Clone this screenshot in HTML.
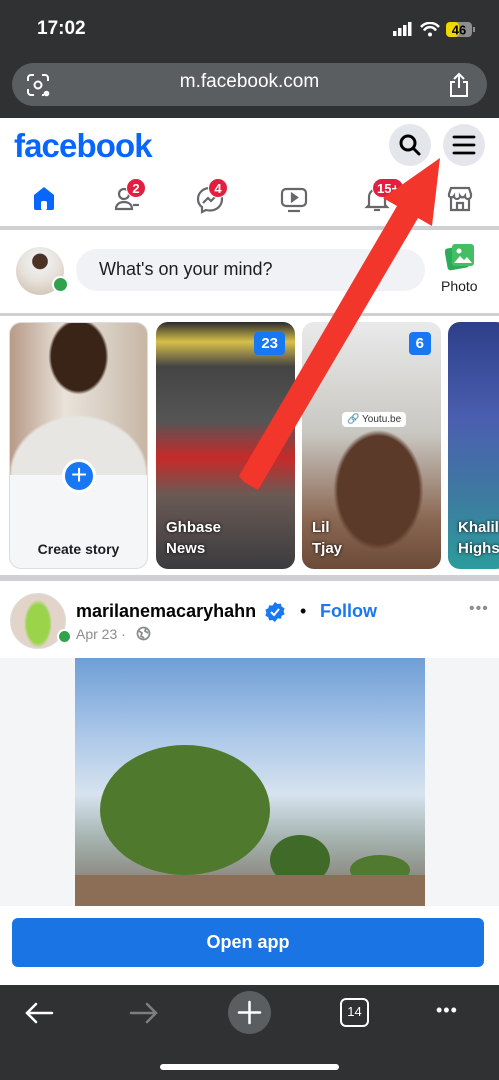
<!DOCTYPE html>
<html><head><meta charset="utf-8"><style>
*{margin:0;padding:0;box-sizing:border-box}
body{width:499px;height:1080px;overflow:hidden;background:#fff;font-family:"Liberation Sans",Arial,sans-serif;position:relative}
.abs{position:absolute}
.badge{position:absolute;background:#e41e3f;color:#fff;font-weight:bold;font-size:13px;border-radius:10px;height:20px;min-width:20px;text-align:center;line-height:20px;padding:0 4px;border:1.5px solid #fff}
.card{position:absolute;top:322px;width:139px;height:247px;border-radius:12px;overflow:hidden}
.cnt{position:absolute;top:10px;right:10px;background:#1877f2;color:#fff;font-weight:bold;font-size:15px;padding:3px 7px;border-radius:4px}
.nm{position:absolute;left:10px;bottom:10px;color:#fff;font-weight:bold;font-size:15px;line-height:21px;text-shadow:0 0 3px #000}
</style></head><body>
<div class="abs" style="left:0;top:0;width:499px;height:118px;background:#2f3133"></div>
<div class="abs" style="left:37px;top:18px;color:#fff;font-size:19px;font-weight:bold">17:02</div>
<svg class="abs" style="left:393px;top:22px" width="82" height="16">
<rect x="0" y="9" width="3.5" height="5" fill="#fff"/><rect x="5" y="6" width="3.5" height="8" fill="#fff"/><rect x="10" y="3" width="3.5" height="11" fill="#fff"/><rect x="15" y="0" width="3.5" height="14" fill="#fff"/>
<path d="M28 5 A12 12 0 0 1 46 5" stroke="#fff" stroke-width="2.5" fill="none"/><path d="M31 8.5 A7 7 0 0 1 43 8.5" stroke="#fff" stroke-width="2.5" fill="none"/><circle cx="37" cy="12.5" r="2" fill="#fff"/>
<rect x="53" y="0" width="26" height="15" rx="4" fill="#8e8e8e"/><rect x="53" y="0" width="13" height="15" rx="4" fill="#f2d600"/><text x="66" y="12.5" text-anchor="middle" font-size="13" font-weight="bold" fill="#000" font-family="Liberation Sans">46</text><rect x="80" y="5" width="2" height="5" fill="#8e8e8e"/>
</svg>
<div class="abs" style="left:12px;top:63px;width:475px;height:43px;border-radius:22px;background:#5b5e61"></div>
<div class="abs" style="left:0;top:71px;width:499px;text-align:center;color:#fff;font-size:19px">m.facebook.com</div>
<svg class="abs" style="left:26px;top:73px" width="24" height="24" fill="none" stroke="#fff" stroke-width="2"><path d="M2 8V5a3 3 0 0 1 3-3h3M16 2h3a3 3 0 0 1 3 3v3M2 16v3a3 3 0 0 0 3 3h3M16 22h2"/><circle cx="12" cy="12" r="3.5"/><circle cx="20.5" cy="20.5" r="1.8" fill="#fff"/></svg>
<svg class="abs" style="left:448px;top:72px" width="22" height="26" fill="none" stroke="#fff" stroke-width="2"><path d="M7 10H3v14h16V10h-4M11 2v14M6 7l5-5 5 5"/></svg>

<div class="abs" style="left:14px;top:127px;color:#0866ff;font-size:33px;font-weight:bold;letter-spacing:-0.9px">facebook</div>
<div class="abs" style="left:389px;top:124px;width:42px;height:42px;border-radius:50%;background:#e4e6eb"></div>
<svg class="abs" style="left:398px;top:133px" width="24" height="24" fill="none" stroke="#000" stroke-width="3"><circle cx="10" cy="10" r="7"/><path d="M15 15l6 6" stroke-linecap="round"/></svg>
<div class="abs" style="left:443px;top:124px;width:42px;height:42px;border-radius:50%;background:#e4e6eb"></div>
<svg class="abs" style="left:452px;top:133px" width="24" height="24" stroke="#000" stroke-width="2.8" stroke-linecap="round"><path d="M2 4h20M2 12h20M2 20h20"/></svg>

<svg class="abs" style="left:32px;top:185px" width="24" height="26"><path d="M2 10L12 2l10 8v13a2 2 0 0 1-2 2H4a2 2 0 0 1-2-2z" fill="#0866ff"/><rect x="9" y="16" width="6" height="9" rx="2" fill="#fff"/></svg>
<svg class="abs" style="left:113px;top:185px" width="28" height="28" fill="none" stroke="#65676b" stroke-width="2.2"><circle cx="11" cy="9" r="5"/><path d="M3 24c0-5 4-7 8-7s8 2 8 7z"/><path d="M20 20h6"/></svg>
<div class="badge" style="left:126px;top:178px">2</div>
<svg class="abs" style="left:196px;top:186px" width="28" height="28" fill="none" stroke="#65676b" stroke-width="2.2"><path d="M14 2C7 2 2 7 2 13c0 3 1 6 4 8v5l4-2c1 .3 2.5.5 4 .5 7 0 12-5 12-11.5S21 2 14 2z"/><path d="M7 17l5-5 3 3 5-5"/></svg>
<div class="badge" style="left:208px;top:178px">4</div>
<svg class="abs" style="left:280px;top:187px" width="28" height="26" fill="none" stroke="#65676b" stroke-width="2.2"><rect x="2" y="2" width="24" height="17" rx="4"/><path d="M8 24h12"/><path d="M12 7v7l5-3.5z" fill="#65676b"/></svg>
<svg class="abs" style="left:364px;top:185px" width="26" height="28" fill="none" stroke="#65676b" stroke-width="2.2"><path d="M5 20V12a8 8 0 0 1 16 0v8l2 2H3z"/><path d="M10 25h6"/></svg>
<div class="badge" style="left:372px;top:178px">15+</div>
<svg class="abs" style="left:446px;top:185px" width="28" height="28" fill="none" stroke="#65676b" stroke-width="2.2"><path d="M3 9l2-6h18l2 6v2a3 3 0 0 1-6 0 3 3 0 0 1-5 0 3 3 0 0 1-6 0 3 3 0 0 1-5 0z"/><path d="M5 13v12h18V13M11 25v-7h6v7"/></svg>
<div class="abs" style="left:0;top:226px;width:499px;height:4px;background:#ced0d4"></div>

<div class="abs" style="left:16px;top:247px;width:48px;height:48px;border-radius:50%;background:radial-gradient(circle at 50% 30%,#4a3224 18%,#eee 20%,#e6e0d8 50%,#c9b9a6)"></div>
<div class="abs" style="left:52px;top:276px;width:17px;height:17px;border-radius:50%;background:#31a24c;border:2px solid #fff"></div>
<div class="abs" style="left:76px;top:249px;width:349px;height:42px;border-radius:21px;background:#f0f2f5"></div>
<div class="abs" style="left:99px;top:259px;font-size:18px;color:#1c1e21">What's on your mind?</div>
<svg class="abs" style="left:445px;top:243px" width="30" height="28"><rect x="1" y="4" width="22" height="22" rx="3" fill="#2eaa5c" transform="rotate(-10 12 15)"/><rect x="7" y="1" width="22" height="22" rx="3" fill="#45bd62"/><circle cx="14" cy="8" r="2.5" fill="#fff"/><path d="M9 20l6-7 4 4 3-3 5 6z" fill="#fff"/></svg>
<div class="abs" style="left:441px;top:278px;font-size:14px;color:#1c1e21">Photo</div>
<div class="abs" style="left:0;top:313px;width:499px;height:3px;background:#ced0d4"></div>

<div class="card" style="left:9px;background:#f5f6f8;border:1px solid #dadde1">
 <div style="height:152px;background:radial-gradient(ellipse 30px 38px at 50% 22%,#3a2418 90%,transparent 100%),radial-gradient(ellipse 70px 60px at 50% 100%,#e8e6e2 95%,transparent 100%),linear-gradient(90deg,#b89a88,#e9e3da 40%,#d8cfc4 70%,#c8b6a4)"></div>
 <div style="position:absolute;left:52px;top:136px;width:34px;height:34px;border-radius:50%;background:#1877f2;border:3px solid #fff;color:#fff;font-size:28px;line-height:26px;text-align:center">+</div>
 <div style="position:absolute;left:0;width:100%;top:218px;text-align:center;font-weight:bold;font-size:14px;color:#1c1e21">Create story</div>
</div>
<div class="card" style="left:156px;background:linear-gradient(180deg,#2a2a2e 0%,#d8c04a 8%,#444 18%,#555 40%,#c62a2a 55%,#6a5a54 70%,#3b3b3f 100%)"><div class="cnt">23</div><div class="nm">Ghbase<br>News</div></div>
<div class="card" style="left:302px;background:radial-gradient(ellipse 45px 60px at 55% 68%,#5b3a2a 90%,transparent 100%),linear-gradient(180deg,#e9eaea,#c9c7c2 45%,#8a6752 80%,#6b4a38)"><div class="cnt">6</div><div style="position:absolute;left:40px;top:90px;background:#fff;border-radius:4px;font-size:10px;padding:2px 5px;color:#333">🔗 Youtu.be</div><div class="nm">Lil<br>Tjay</div></div>
<div class="card" style="left:448px;width:60px;background:linear-gradient(180deg,#2d3f8a,#4b5fb0 40%,#3e7aa0 70%,#2b9c9c)"><div class="nm">Khalil<br>Highst</div></div>
<div class="abs" style="left:0;top:575px;width:499px;height:6px;background:#ced0d4"></div>

<div class="abs" style="left:10px;top:593px;width:56px;height:56px;border-radius:50%;border:1px solid #ddd;background:radial-gradient(ellipse 14px 24px at 50% 55%,#9ad44a 80%,transparent 100%),#e2d4c8"></div>
<div class="abs" style="left:57px;top:629px;width:15px;height:15px;border-radius:50%;background:#31a24c;border:2px solid #fff"></div>
<div class="abs" style="left:76px;top:601px;font-size:18px;font-weight:bold;color:#050505">marilanemacaryhahn</div>
<svg class="abs" style="left:264px;top:601px" width="22" height="22"><path d="M11 1l2.6 2 3.2-.4.9 3.1 2.9 1.5-1 3 1 3-2.9 1.5-.9 3.1-3.2-.4L11 21l-2.6-2-3.2.4-.9-3.1-2.9-1.5 1-3-1-3 2.9-1.5.9-3.1 3.2.4z" fill="#1877f2"/><path d="M7 11l3 3 5-6" stroke="#fff" stroke-width="2" fill="none"/></svg>
<div class="abs" style="left:300px;top:601px;font-size:18px;color:#050505">•</div>
<div class="abs" style="left:320px;top:601px;font-size:18px;font-weight:bold;color:#1877f2">Follow</div>
<div class="abs" style="left:469px;top:600px;font-size:16px;color:#8a8d91;letter-spacing:1px">•••</div>
<div class="abs" style="left:76px;top:626px;font-size:14px;color:#8a8d91">Apr 23 · </div>
<svg class="abs" style="left:136px;top:626px" width="15" height="15" fill="none" stroke="#8a8d91" stroke-width="1.8"><circle cx="7.5" cy="7.5" r="6"/><path d="M3 5l3 2-1 3 3 2M10 2l-1 3 3 2"/></svg>

<div class="abs" style="left:0;top:658px;width:499px;height:248px;background:#f4f5f6"></div>
<div class="abs" style="left:75px;top:658px;width:350px;height:248px;background:linear-gradient(180deg,#6f9ed6 0%,#a9c6e8 30%,#d7e3ef 55%,#a7b5b2 72%,#7a6e62 100%)"></div>
<div class="abs" style="left:100px;top:745px;width:170px;height:130px;border-radius:50%;background:#4f7a2e"></div>
<div class="abs" style="left:270px;top:835px;width:60px;height:50px;border-radius:50%;background:#3f6a28"></div>
<div class="abs" style="left:350px;top:855px;width:60px;height:30px;border-radius:50%;background:#507a30"></div>
<div class="abs" style="left:75px;top:875px;width:350px;height:31px;background:#8c6e56"></div>

<div class="abs" style="left:0;top:906px;width:499px;height:79px;background:#fff"></div>
<div class="abs" style="left:12px;top:918px;width:472px;height:49px;border-radius:6px;background:#1b74e4;color:#fff;font-size:18px;font-weight:bold;text-align:center;line-height:49px">Open app</div>

<div class="abs" style="left:0;top:985px;width:499px;height:95px;background:#2f3133"></div>
<svg class="abs" style="left:24px;top:1001px" width="30" height="24" fill="none" stroke="#fff" stroke-width="2.5" stroke-linecap="round"><path d="M28 12H3M12 3l-9 9 9 9"/></svg>
<svg class="abs" style="left:129px;top:1001px" width="30" height="24" fill="none" stroke="#7c7e80" stroke-width="2.5" stroke-linecap="round"><path d="M2 12h25M18 3l9 9-9 9"/></svg>
<div class="abs" style="left:228px;top:991px;width:43px;height:43px;border-radius:50%;background:#5b5e61"></div>
<svg class="abs" style="left:237px;top:1000px" width="25" height="25" stroke="#fff" stroke-width="2.5" stroke-linecap="round"><path d="M12.5 2v21M2 12.5h21"/></svg>
<div class="abs" style="left:340px;top:998px;width:29px;height:29px;border:2.5px solid #fff;border-radius:6px;color:#fff;font-size:13px;text-align:center;line-height:24px">14</div>
<div class="abs" style="left:436px;top:1000px;color:#fff;font-size:18px;letter-spacing:1px">•••</div>
<div class="abs" style="left:160px;top:1064px;width:179px;height:6px;border-radius:3px;background:#fff"></div>

<svg class="abs" style="left:0;top:0" width="499" height="1080"><path d="M244 482 L258 490 L418 218 L432 226 L440 158 L383 198 L397 206 L239 476 Z" fill="#f2362b"/></svg>
</body></html>
